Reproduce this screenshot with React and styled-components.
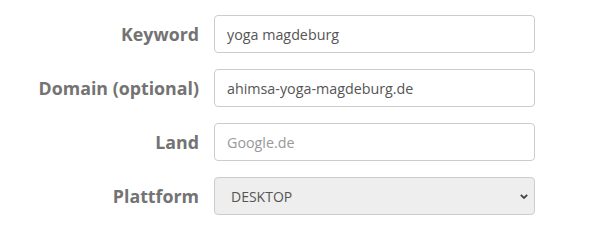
import React from 'react';
import styled, { createGlobalStyle } from 'styled-components';

const GlobalStyle = createGlobalStyle`
  html, body {
    margin: 0;
    padding: 0;
    background: #fff;
  }
  body {
    font-family: "Open Sans", "Noto Sans", sans-serif;
  }
`;

const Form = styled.form`
  display: flex;
  flex-direction: column;
  gap: 16px;
  padding-top: 15px;
`;

const Row = styled.div`
  display: grid;
  grid-template-columns: 199px 321px;
  column-gap: 15px;
  align-items: center;
`;

const Label = styled.label`
  text-align: right;
  font-size: 17.8px;
  font-weight: 700;
  color: #737373;
`;

const Input = styled.input`
  box-sizing: border-box;
  height: 38px;
  width: 100%;
  padding: 0 12px;
  border: 1px solid #ccc;
  border-radius: 4px;
  background: #fff;
  font-family: "Open Sans", sans-serif;
  font-size: 14.3px;
  color: #555;
  outline: none;

  &::placeholder {
    color: #999;
  }
`;

const SelectWrap = styled.div`
  position: relative;
  height: 38px;
`;

const Select = styled.select`
  box-sizing: border-box;
  appearance: none;
  height: 38px;
  width: 100%;
  padding: 0 12px 0 16px;
  border: 1px solid #ccc;
  border-radius: 4px;
  background: #eee;
  font-family: "Open Sans", sans-serif;
  font-size: 14px;
  color: #555;
  outline: none;
`;

const Chevron = styled.svg`
  position: absolute;
  right: 7px;
  top: 17px;
  pointer-events: none;
`;

export default function App() {
  return (
    <>
      <GlobalStyle />
      <Form>
        <Row>
          <Label>Keyword</Label>
          <Input defaultValue="yoga magdeburg" />
        </Row>
        <Row>
          <Label>Domain (optional)</Label>
          <Input defaultValue="ahimsa-yoga-magdeburg.de" />
        </Row>
        <Row>
          <Label>Land</Label>
          <Input placeholder="Google.de" />
        </Row>
        <Row>
          <Label>Plattform</Label>
          <SelectWrap>
            <Select defaultValue="DESKTOP">
              <option>DESKTOP</option>
              <option>MOBILE</option>
            </Select>
            <Chevron width="8" height="5" viewBox="0 0 8 5">
              <path d="M0.8 0.8 L4 4 L7.2 0.8" fill="none" stroke="#444" strokeWidth="1.8" />
            </Chevron>
          </SelectWrap>
        </Row>
      </Form>
    </>
  );
}
